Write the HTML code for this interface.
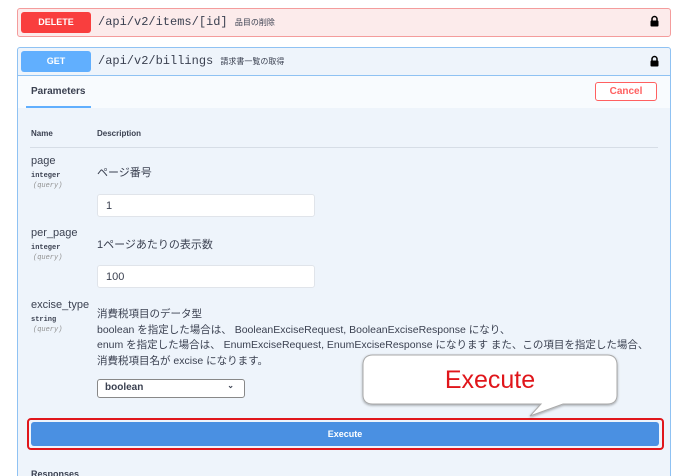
<!DOCTYPE html>
<html style="width:680px;height:476px;overflow:hidden"><head><meta charset="utf-8"><style>
*{box-sizing:border-box;margin:0;padding:0}
body{width:680px;height:476px;overflow:hidden;background:#fff;font-family:"Liberation Sans","Noto Sans CJK JP",sans-serif;position:relative;color:#3b4151}
.abs{position:absolute}
.mono{font-family:"Liberation Mono","Noto Sans CJK JP",monospace}
.lock{position:absolute;width:9px;height:12px}
.small{font-size:9px;font-weight:bold;color:#3b4151}
.t{font-size:11px;color:#3b4151}
.inp{position:absolute;background:#fff;border:1px solid #e0e4ea;border-radius:3px;font-size:11px;padding:5px 8px}
</style></head><body>
<div class="abs" style="left:17px;top:8px;width:654px;height:29px;background:#fcebeb;border:1px solid #f49c9c;border-radius:3px"></div>
<div class="abs" style="left:21px;top:12px;width:70px;height:21px;background:#f93e3e;border-radius:3px;color:#fff;font-size:9px;font-weight:bold;text-align:center;line-height:21px">DELETE</div>
<div class="abs mono" style="left:98px;top:15px;font-size:12px;color:#3b4151">/api/v2/items/[id] <span style="font-size:8px;font-family:'Noto Sans CJK JP',sans-serif">品目の削除</span></div>
<svg class="lock" style="left:650px;top:15px" viewBox="0 0 9 12"><path d="M2 6V4a2.5 2.5 0 0 1 5 0v2" fill="none" stroke="#000" stroke-width="1.5"/><rect x="0.5" y="5.5" width="8" height="6" rx="1" fill="#000"/></svg>
<div class="abs" style="left:17px;top:47px;width:654px;height:440px;background:#eef4fb;border:1px solid #8fc2f3;border-radius:3px"></div>
<div class="abs" style="left:18px;top:75px;width:652px;height:1px;background:#8fc2f3"></div>
<div class="abs" style="left:21px;top:51px;width:70px;height:21px;background:#61affe;border-radius:3px;color:#fff;font-size:9px;font-weight:bold;text-align:center;line-height:21px">GET</div>
<div class="abs mono" style="left:98px;top:54px;font-size:12px">/api/v2/billings <span style="font-size:8px;font-family:'Noto Sans CJK JP',sans-serif">請求書一覧の取得</span></div>
<svg class="lock" style="left:650px;top:55px" viewBox="0 0 9 12"><path d="M2 6V4a2.5 2.5 0 0 1 5 0v2" fill="none" stroke="#000" stroke-width="1.5"/><rect x="0.5" y="5.5" width="8" height="6" rx="1" fill="#000"/></svg>
<div class="abs" style="left:18px;top:76px;width:652px;height:32px;background:#f8fbfe"></div>
<div class="abs small" style="left:31px;top:86px;font-size:10px">Parameters</div>
<div class="abs" style="left:26px;top:106px;width:65px;height:2px;background:#61affe"></div>
<div class="abs" style="left:595px;top:82px;width:62px;height:19px;border:1px solid #ff6060;border-radius:3px;background:#fff;color:#ff6060;font-size:10px;text-align:center;line-height:17px;font-weight:bold">Cancel</div>
<div class="abs small" style="left:31px;top:129px;font-size:8px">Name</div>
<div class="abs small" style="left:97px;top:129px;font-size:8px">Description</div>
<div class="abs" style="left:30px;top:147px;width:628px;height:1px;background:#d6dde6"></div>
<div class="abs t" style="left:31px;top:155px;font-size:11px">page</div>
<div class="abs mono" style="left:31px;top:172px;font-size:7px;font-weight:bold">integer</div>
<div class="abs mono" style="left:33px;top:182px;font-size:7px;font-style:italic;color:#909090">(query)</div>
<div class="abs t" style="left:97px;top:164px">ページ番号</div>
<div class="inp" style="left:97px;top:194px;width:218px;height:23px">1</div>
<div class="abs t" style="left:31px;top:227px;font-size:11px">per_page</div>
<div class="abs mono" style="left:31px;top:244px;font-size:7px;font-weight:bold">integer</div>
<div class="abs mono" style="left:33px;top:254px;font-size:7px;font-style:italic;color:#909090">(query)</div>
<div class="abs t" style="left:97px;top:236px">1ページあたりの表示数</div>
<div class="inp" style="left:97px;top:265px;width:218px;height:23px">100</div>
<div class="abs t" style="left:31px;top:299px;font-size:11px">excise_type</div>
<div class="abs mono" style="left:31px;top:316px;font-size:7px;font-weight:bold">string</div>
<div class="abs mono" style="left:33px;top:326px;font-size:7px;font-style:italic;color:#909090">(query)</div>
<div class="abs t" style="left:97px;top:307px;line-height:15.7px;font-size:10.5px;white-space:nowrap">消費税項目のデータ型<br>boolean を指定した場合は、 BooleanExciseRequest, BooleanExciseResponse になり、<br>enum を指定した場合は、 EnumExciseRequest, EnumExciseResponse になります また、この項目を指定した場合、<br>消費税項目名が excise になります。</div>
<div class="abs" style="left:97px;top:379px;width:148px;height:19px;border:1px solid #888;border-radius:3px;background:#fff;font-size:10px;font-weight:bold;padding:2px 7px">boolean<span style="position:absolute;right:10px;top:1px;font-size:8px">⌄</span></div>
<div class="abs" style="left:27px;top:418px;width:637px;height:32px;border:2px solid #e0161b;border-radius:4px"></div>
<div class="abs" style="left:31px;top:422px;width:628px;height:24px;background:#4a90e2;border-radius:3px;color:#fff;font-size:9px;font-weight:bold;text-align:center;line-height:24px">Execute</div>
<div class="abs small" style="left:31px;top:469px;font-size:9px">Responses</div>
<svg class="abs" style="left:355px;top:350px" width="275" height="70" viewBox="0 0 275 70">
<defs><filter id="s"><feDropShadow dx="0" dy="1" stdDeviation="1.2" flood-color="#000" flood-opacity="0.35"/></filter></defs>
<path d="M18 5 H252 Q262 5 262 15 V45 Q262 54 252 54 H208 L175 66 L186 54 H18 Q8 54 8 45 V15 Q8 5 18 5 Z" fill="#fff" stroke="#aaa" stroke-width="1" filter="url(#s)"/>
<text x="135" y="38" text-anchor="middle" font-family="Liberation Sans, sans-serif" font-size="25" fill="#e0161b">Execute</text>
</svg>
</body></html>
